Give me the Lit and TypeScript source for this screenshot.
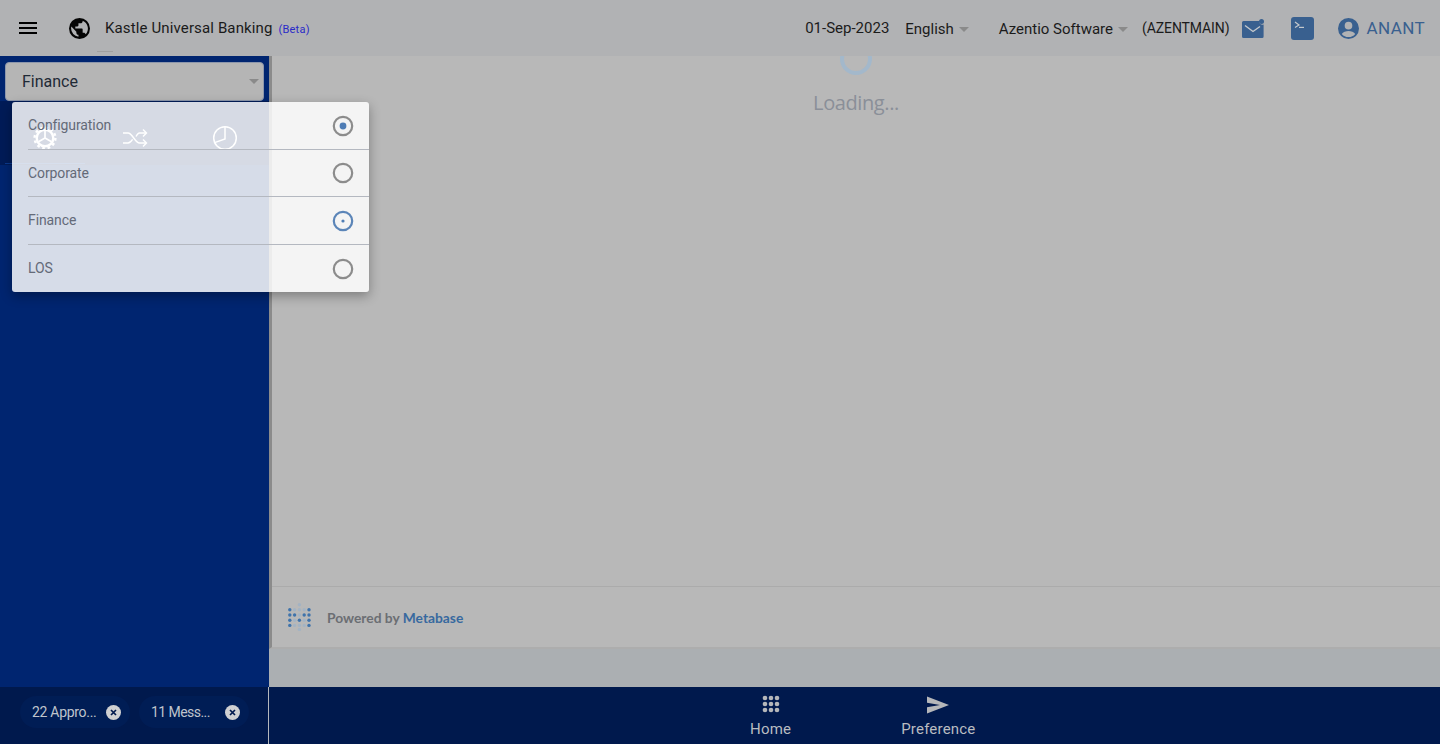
import { LitElement, html, css, svg } from "lit";
import { customElement } from "lit/decorators.js";

const metabaseDots = () => {
  const blue = ["b...b", "bb.bb", "b.b.b", "b...b"];
  const dots: [number, number, boolean][] = [];
  blue.forEach((row, r) => {
    [...row].forEach((ch, c) => dots.push([1.8 + c * 4.8, 6.8 + r * 5.2, ch === "b"]));
  });
  dots.push([11.4, 1.8, false], [11.4, 26.4, false]);
  return svg`<svg class="mb" viewBox="0 0 23 28" width="23" height="28">${dots.map(
    ([x, y, b]) => svg`<circle cx=${x} cy=${y} r="1.7" fill=${b ? "#3f73ab" : "#a3b3c3"}></circle>`
  )}</svg>`;
};

@customElement("app-root")
export class AppRoot extends LitElement {
  static styles = css`
    :host { display: block; width: 1440px; height: 744px; overflow: hidden; position: relative; font-family: Roboto, "Liberation Sans", sans-serif; }
    .page { display: grid; grid-template-rows: 56px 631px 57px; height: 744px; }
    header { background: #b1b2b4; display: flex; align-items: center; position: relative; color: #1a1a1a; }
    .burger { margin-left: 19px; width: 18px; display: flex; flex-direction: column; gap: 2.5px; }
    .burger i { display: block; height: 2.2px; background: #000; }
    .globe { margin-left: 32px; width: 21px; height: 21px; flex: none; }
    .title { margin-left: 15px; font-size: 15px; letter-spacing: .13px; }
    .beta { font-size: 11px; color: #2a2ac8; margin-left: 2px; letter-spacing: .25px; }
    .right { margin-left: auto; display: flex; align-items: center; font-size: 15px; color: #1b1b1b; padding-right: 15px; }
    .date { margin-right: 16px; }
    .caret { display: inline-block; width: 0; height: 0; border-left: 5px solid transparent; border-right: 5px solid transparent; border-top: 5px solid #8a8a8a; margin-left: 5px; vertical-align: 2px; }
    .lang { margin-right: 30px; padding-top: 1px; }
    .co { margin-right: 14px; padding-top: 1px; }
    .code { font-size: 14px; margin-right: 12px; letter-spacing: -.1px; }
    .ic-mail { width: 22px; height: 20px; margin-right: 27px; }
    .ic-term { width: 23px; height: 23px; margin-right: 24px; }
    .ic-user { width: 21px; height: 21px; margin-right: 8px; }
    .user { font-size: 17px; color: #39608f; letter-spacing: .4px; }
    .tick { position: absolute; left: 97px; top: 51px; width: 16px; height: 1px; background: #9f9f9f; }

    .body { display: grid; grid-template-columns: 269px 1fr; min-height: 0; }
    aside { background: #002570; display: flex; flex-direction: column; padding-top: 6px; }
    .select { margin: 0 5px; height: 39px; box-sizing: border-box; background: #b5b5b5; border: 1px solid #8d97ac; border-radius: 4px; display: flex; align-items: center; padding: 0 4px 0 16px; font-size: 16px; color: #1f2a36; }
    .select .caret { margin-left: auto; border-top-color: #8a8a8a; }
    .strip { height: 64px; background: #001b57; position: relative; display: flex; align-items: center; padding-left: 32px; gap: 64px; }
    .strip svg { width: 26px; height: 26px; flex: none; margin-top: 10px; }
    .strip .line { position: absolute; left: 5px; bottom: 1px; width: 80px; height: 1px; background: #0b3a8f; }

    main { display: flex; flex-direction: column; background: #abafb2; min-width: 0; }
    .card { height: 593px; background: #b8b8b8; display: flex; flex-direction: column; border-left: 3px solid #8b8b8b; border-bottom: 2px solid #adadad; box-sizing: border-box; }
    .loading { flex: none; height: 530px; overflow: hidden; display: flex; flex-direction: column; align-items: center; color: #8a8f98; font-family: "Open Sans", sans-serif; font-size: 20px; letter-spacing: -.4px; }
    .spin { width: 32px; height: 32px; box-sizing: border-box; border: 4px solid #a3b8cb; border-radius: 50%; margin-top: -13px; margin-bottom: 14px; flex: none; }
    .power { flex: 1; border-top: 1px solid #ababab; display: flex; align-items: center; padding-left: 16px; gap: 16px; font-family: Lato, sans-serif; font-weight: 700; font-size: 13.8px; color: #6b6e73; }
    .power span { padding-top: 1px; }
    .power b { color: #37699f; font-weight: 700; }

    .bottom { display: grid; grid-template-columns: 269px 1fr; background: #00194d; }
    .chips { display: flex; align-items: center; gap: 9px; padding-left: 20px; border-right: 1px solid #b4b8bd; padding-bottom: 7px; }
    .chip { width: 110px; height: 32px; border-radius: 16px; background: #001d55; display: flex; align-items: center; color: #bfc4cc; font-size: 14px; letter-spacing: -.3px; padding: 0 9px 0 12px; box-sizing: border-box; }
    .chip + .chip { letter-spacing: -.55px; }
    .chip svg { width: 15px; height: 15px; margin-left: auto; }
    .nav { display: flex; padding-left: 481px; gap: 110px; color: #b9bcc0; font-size: 15px; letter-spacing: .2px; }
    .nav div { display: flex; flex-direction: column; align-items: center; padding-top: 7px; }
    .nav svg { display: block; height: 22px; width: 22px; margin-bottom: 4px; }

    .menu { position: absolute; left: 12px; top: 102px; width: 357px; height: 190px; background: rgba(255,255,255,.84); border-radius: 3px; box-shadow: 0 4px 12px rgba(0,0,0,.32); font-size: 14px; color: #646a78; }
    .row { height: 47.5px; margin-left: 16px; box-sizing: border-box; border-bottom: 1px solid #b4b8c0; display: flex; align-items: center; padding-right: 15px; letter-spacing: -.1px; }
    .row:last-child { border-bottom: 0; }
    .row span { flex: 1; }
    .row svg { width: 22px; height: 22px; margin-top: 1px; }
  `;

  radio(kind: "checked" | "focus" | "off") {
    if (kind === "checked")
      return html`<svg viewBox="0 0 22 22"><circle cx="11" cy="11" r="9.2" fill="none" stroke="#8c8c8c" stroke-width="2.2"></circle><circle cx="11" cy="11" r="3.4" fill="#4f7db5"></circle></svg>`;
    if (kind === "focus")
      return html`<svg viewBox="0 0 22 22"><circle cx="11" cy="11" r="9.2" fill="none" stroke="#5b85b8" stroke-width="2.2"></circle><circle cx="11" cy="11" r="1.6" fill="#4f7db5"></circle></svg>`;
    return html`<svg viewBox="0 0 22 22"><circle cx="11" cy="11" r="9.2" fill="none" stroke="#8c8c8c" stroke-width="2.2"></circle></svg>`;
  }

  render() {
    const close = html`<svg viewBox="0 0 15 15"><circle cx="7.5" cy="7.5" r="7.5" fill="#cfd0d2"></circle><path d="M5 5l5 5M10 5l-5 5" stroke="#00194d" stroke-width="1.7"></path></svg>`;
    return html`
      <div class="page">
        <header>
          <div class="burger"><i></i><i></i><i></i></div>
          <svg class="globe" viewBox="2 2 20 20"><path d="M12 2a10 10 0 100 20 10 10 0 000-20zM4 12c0-.6.1-1.2.2-1.8L9 15v1c0 1.1.9 2 2 2v1.9A8 8 0 014 12zm13.9 5.4c-.3-.8-1-1.4-1.9-1.4h-1v-3c0-.6-.4-1-1-1H8v-2h2c.6 0 1-.4 1-1V7h2c1.1 0 2-.9 2-2v-.4a8 8 0 012.9 12.8z" fill="#050505"></path></svg>
          <div class="title">Kastle Universal Banking <span class="beta">(Beta)</span></div>
          <div class="right">
            <span class="date">01-Sep-2023</span>
            <span class="lang">English<i class="caret"></i></span>
            <span class="co">Azentio Software<i class="caret"></i></span>
            <span class="code">(AZENTMAIN)</span>
            <svg class="ic-mail" viewBox="0 0 22 20"><path d="M1.5 3H17a3.6 3.6 0 004.6 3.6v11.9a1.5 1.5 0 01-1.5 1.5H1.5A1.5 1.5 0 010 18.5v-14A1.5 1.5 0 011.5 3z" fill="#39608f"></path><path d="M3 7.5l8 6 7-5" fill="none" stroke="#c4c8cc" stroke-width="1.4"></path><circle cx="19.5" cy="3.6" r="2.5" fill="#39608f"></circle></svg>
            <svg class="ic-term" viewBox="0 0 23 23"><rect width="23" height="23" rx="3" fill="#39608f"></rect><path d="M4 5l4 3-4 2.5" fill="none" stroke="#c4c8cc" stroke-width="1.2"></path><path d="M8 10.4h5" stroke="#c4c8cc" stroke-width="1.2"></path></svg>
            <svg class="ic-user" viewBox="1 1 22 22"><path d="M12 1a11 11 0 100 22 11 11 0 000-22zm0 4a4 4 0 110 8 4 4 0 010-8zm0 16a9 9 0 01-7-3.3c1-2.2 4.4-3.2 7-3.2s6 1 7 3.2a9 9 0 01-7 3.3z" fill="#39608f"></path></svg>
            <span class="user">ANANT</span>
          </div>
          <div class="tick"></div>
        </header>

        <div class="body">
          <aside>
            <div class="select">Finance<i class="caret"></i></div>
            <div class="strip">
              <svg viewBox="0 0 26 26" fill="none" stroke="#fff" stroke-width="1.7"><circle cx="13" cy="13" r="8.3" stroke-width="2.4"></circle><circle cx="13" cy="13" r="10.4" stroke-width="2.4" stroke-dasharray="2.7 2.75"></circle><path d="M13 13V5.5M13 13l6.5 3.8M13 13l-6.5 3.8"></path></svg>
              <svg viewBox="0 0 26 26" fill="none" stroke="#fff" stroke-width="1.4"><path d="M1 8h5c4.5 0 7 10 11.5 10H24M1 18h5c1.8 0 3.2-1.6 4.6-3.6M14 11.5C15 9.6 16 8 17.5 8H24"></path><path d="M21 4.5L24.5 8 21 11.5M21 14.5l3.5 3.5-3.5 3.5"></path></svg>
              <svg viewBox="0 0 26 26" fill="none" stroke="#fff" stroke-width="1.5"><circle cx="13" cy="13" r="11.3"></circle><path d="M13 1.7V14L2.6 17.6"></path></svg>
              <div class="line"></div>
            </div>
          </aside>
          <main>
            <div class="card">
              <div class="loading">
                <div class="spin"></div>
                <div>Loading...</div>
              </div>
              <div class="power">${metabaseDots()}<span>Powered by <b>Metabase</b></span></div>
            </div>
          </main>
        </div>

        <div class="bottom">
          <div class="chips">
            <div class="chip">22 Appro...${close}</div>
            <div class="chip">11 Mess...${close}</div>
          </div>
          <div class="nav">
            <div>
              <svg viewBox="0 0 22 22" fill="#b5b7ba">${[3, 9, 15].flatMap((y) => [4, 10, 16].map((x) => svg`<circle cx=${x + 1} cy=${y + 1} r="2.3"></circle>`))}</svg>
              Home
            </div>
            <div>
              <svg viewBox="0 0 22 22" fill="#b5b7ba"><path d="M0 2.5L22 11 0 19.5v-6.3L13 11 0 8.8z"></path></svg>
              Preference
            </div>
          </div>
        </div>
      </div>

      <div class="menu">
        <div class="row"><span>Configuration</span>${this.radio("checked")}</div>
        <div class="row"><span>Corporate</span>${this.radio("off")}</div>
        <div class="row"><span>Finance</span>${this.radio("focus")}</div>
        <div class="row"><span>LOS</span>${this.radio("off")}</div>
      </div>
    `;
  }
}
